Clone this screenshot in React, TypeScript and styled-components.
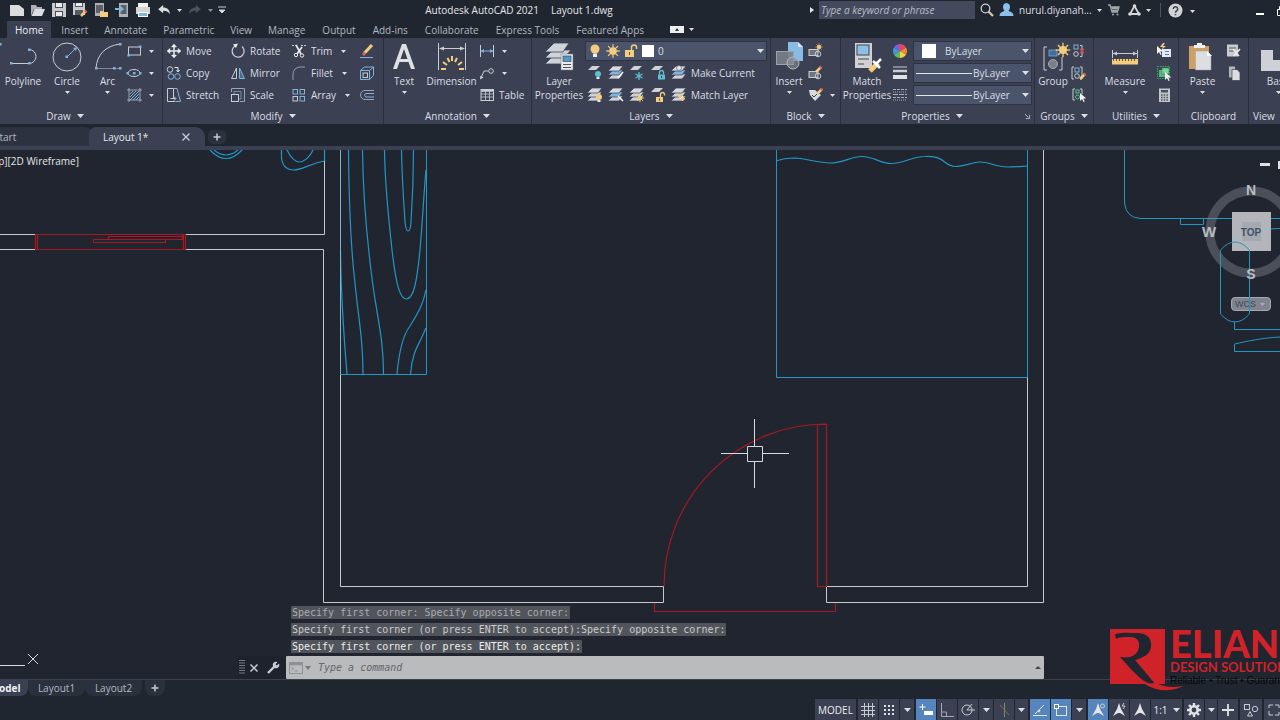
import React from "react";
import styled, { createGlobalStyle } from "styled-components";

const c = {
  frame: "#20262f",
  canvas: "#212530",
  ribbon: "#3b4053",
  edge: "#2a2f3d",
  combo: "#4a546a",
  text: "#dcdfe4",
  dim: "#b4b9c1",
  icon: "#c9cdd3",
  blue: "#7fb4dc",
  amber: "#f3cc7e",
  cyan: "#2397c4",
  red: "#a81820",
  wall: "#c6c9d0",
};

const GlobalStyle = createGlobalStyle`
  * { box-sizing: border-box; }
  body { margin: 0; overflow: hidden; background: ${c.frame}; }
  button, select, input { font: inherit; color: inherit; border: 0; padding: 0; margin: 0; background: none; }
  button { cursor: pointer; white-space: nowrap; }
  select option { color: #222; }
`;

const Page = styled.div`
  position: relative;
  display: flex;
  flex-direction: column;
  height: 100vh;
  overflow: hidden;
  background: ${c.frame};
  color: ${c.text};
  font-family: "Open Sans", "Noto Sans", sans-serif;
  font-size: 10px;
  line-height: 14px;
`;

const Icon = styled.svg<{ $w?: number; $h?: number }>`
  display: block;
  flex: none;
  width: ${(p) => p.$w ?? 16}px;
  height: ${(p) => p.$h ?? 16}px;
  fill: none;
  stroke: ${c.icon};
  overflow: visible;
`;

/* ---------- title bar ---------- */
const TitleBar = styled.header`
  display: flex;
  align-items: center;
  flex: none;
  height: 20px;
`;
const QuickAccess = styled.div`
  display: flex;
  align-items: center;
  gap: 5px;
  width: 230px;
  height: 18px;
  padding-left: 9px;
`;
const PlainButton = styled.button<{ $w?: number }>`
  display: flex;
  flex: none;
  align-items: center;
  justify-content: center;
  width: ${(p) => (p.$w ? p.$w + "px" : "auto")};
`;
const WindowTitle = styled.h1`
  display: flex;
  justify-content: center;
  gap: 12px;
  flex: 1;
  margin: 0;
  font-size: 10px;
  font-weight: 400;
  color: #e4e6ea;
`;
const TitleTools = styled.div`
  display: flex;
  align-items: center;
  flex: none;
  width: 472px;
  height: 18px;
  overflow: hidden;
`;
const SearchInput = styled.input`
  && {
    flex: none;
    width: 156px;
    height: 18px;
    margin-left: 3px;
    padding: 0 2px;
    background: #434a5d;
    font-style: italic;
    color: #c3c7cf;
  }
  &::placeholder { color: #b9bdc6; opacity: 1; }
`;
const UserButton = styled.button`
  display: flex;
  flex: none;
  align-items: center;
  gap: 5px;
  width: 104px;
`;
const Divider = styled.span`
  flex: none;
  width: 1px;
  height: 14px;
  margin: 0 6px 0 3px;
  background: #4d5360;
`;
const WindowButtons = styled.div`
  display: flex;
  flex: none;
  gap: 13px;
  padding-left: 59px;
`;

/* ---------- menu ---------- */
const Menu = styled.nav`
  display: flex;
  align-items: flex-end;
  flex: none;
  height: 18px;
  padding-left: 7px;
`;
const MenuTab = styled.button<{ $active?: boolean }>`
  && {
    height: 17px;
    padding: 0 8px;
    color: ${(p) => (p.$active ? "#eef0f3" : c.dim)};
    background: ${(p) => (p.$active ? c.ribbon : "transparent")};
  }
  &:first-child { margin-right: 2px; }
  &:nth-child(n + 6) { margin-right: 1px; }
`;
const MinimizeRibbon = styled.button`
  && {
    display: flex;
    align-items: center;
    gap: 5px;
    height: 17px;
    margin-left: 17px;
  }
`;

/* ---------- ribbon ---------- */
const Ribbon = styled.section`
  display: flex;
  flex: none;
  margin-left: -32px;
  background: ${c.ribbon};
`;
const PanelBox = styled.div<{ $w: number; $grow?: boolean }>`
  display: flex;
  flex-direction: column;
  flex: ${(p) => (p.$grow ? "1 0 " : "0 0 ")} ${(p) => p.$w}px;
  min-width: 0;
  border-right: 1px solid ${c.edge};
`;
const PanelBody = styled.div<{ $pad?: number }>`
  display: flex;
  height: 70px;
  padding: 2px 0 0 ${(p) => p.$pad ?? 0}px;
`;
const PanelFoot = styled.button<{ $left?: boolean }>`
  && {
    display: flex;
    align-items: center;
    justify-content: ${(p) => (p.$left ? "flex-start" : "center")};
    gap: 6px;
    height: 16px;
    padding: 0 4px;
  }
`;
const FootLabel = styled.span`
  margin: 0 auto;
  display: flex;
  align-items: center;
  gap: 6px;
`;
const LargeButton = styled.button<{ $w: number }>`
  && {
    display: flex;
    flex: none;
    flex-direction: column;
    align-items: center;
    width: ${(p) => p.$w}px;
    height: 66px;
    padding-top: 2px;
    line-height: 14px;
  }
`;
const Column = styled.div<{ $w?: number }>`
  display: flex;
  flex: none;
  flex-direction: column;
  width: ${(p) => (p.$w ? p.$w + "px" : "auto")};
`;
const Row = styled.div<{ $gap?: number; $pad?: number }>`
  display: flex;
  align-items: center;
  gap: ${(p) => p.$gap ?? 0}px;
  height: 22px;
  padding-left: ${(p) => p.$pad ?? 0}px;
`;
const Tool = styled.button<{ $gap: number }>`
  && {
    display: flex;
    align-items: center;
    gap: ${(p) => p.$gap}px;
    height: 22px;
  }
`;
const ArrowSlot = styled.span`
  display: flex;
  justify-content: center;
  width: 15px;
`;
const Combo = styled.label<{ $w: number; $pad: number; $gap: number }>`
  display: flex;
  align-items: center;
  gap: ${(p) => p.$gap}px;
  width: ${(p) => p.$w}px;
  height: 20px;
  padding: 0 2px 0 ${(p) => p.$pad}px;
  background: ${c.combo};
  border: 1px solid #2d3344;
`;
const ComboSelect = styled.select`
  && {
    flex: 1;
    min-width: 0;
    appearance: none;
    outline: 0;
  }
`;
const Swatch = styled.span<{ $s: number }>`
  width: ${(p) => p.$s}px;
  height: ${(p) => p.$s}px;
  background: #fff;
`;
const LineSample = styled.span`
  width: 56px;
  height: 1px;
  background: #e3e5e9;
`;

/* ---------- drawing tabs ---------- */
const FileTabs = styled.nav`
  display: flex;
  align-items: flex-end;
  flex: none;
  height: 26px;
  border-bottom: 4px solid ${c.ribbon};
  overflow: hidden;
`;
const FileTab = styled.div<{ $active?: boolean; $w: number }>`
  display: flex;
  align-items: center;
  justify-content: space-between;
  width: ${(p) => p.$w}px;
  height: 19px;
  margin-left: -6px;
  padding: ${(p) => (p.$active ? "0 15px 0 14px" : "0")};
  border-radius: 7px 10px 0 0;
  background: ${(p) => (p.$active ? c.ribbon : "#2d3240")};
  color: ${(p) => (p.$active ? "#e6e8ec" : c.dim)};
`;
const NewTab = styled.button`
  && {
    display: flex;
    align-items: center;
    justify-content: center;
    width: 18px;
    height: 14px;
    margin: 0 0 2px 3px;
    border-radius: 5px;
    background: #2d323f;
  }
`;

/* ---------- canvas ---------- */
const Workspace = styled.main`
  position: relative;
  flex: 1;
  min-height: 0;
  overflow: hidden;
  background: ${c.canvas};
  border-bottom: 1px solid #3b414d;
`;
const Drawing = styled.svg`
  display: block;
  width: 100%;
  height: 100%;
  fill: none;
`;
const ViewLabel = styled.div`
  position: absolute;
  top: 4px;
  right: calc(100% - 79px);
  white-space: nowrap;
  color: #e3e5e9;
`;
const ViewTools = styled.div`
  position: absolute;
  top: 13px;
  right: -6px;
  display: flex;
  gap: 8px;
`;
const ViewCube = styled.div`
  position: absolute;
  top: 30px;
  right: -26px;
  width: 110px;
`;
const CubeText = styled.text`
  font-family: "Liberation Sans", Arial, sans-serif;
  font-weight: 700;
  text-anchor: middle;
`;
const WcsButton = styled.button`
  && {
    display: flex;
    align-items: center;
    justify-content: space-between;
    width: 40px;
    height: 14px;
    margin: 3px 0 0 35px;
    padding: 0 5px 0 3px;
    border-radius: 4px;
    border: 1px solid #a4a8b3;
    background: #8f939fdd;
    color: #444957;
    font-family: "Liberation Sans", Arial, sans-serif;
    font-size: 9px;
  }
`;
const CommandWindow = styled.section`
  position: absolute;
  left: 237px;
  right: 236px;
  bottom: 0;
  font-family: "DejaVu Sans Mono", monospace;
`;
const History = styled.div`
  display: flex;
  flex-direction: column;
  align-items: flex-start;
  gap: 4px;
  margin: 0 0 3px 54px;
`;
const HistoryLine = styled.p<{ $tone: string }>`
  margin: 0;
  padding: 0 1px;
  height: 13px;
  line-height: 13px;
  border-radius: 1px;
  white-space: nowrap;
  background: #51545a;
  color: ${(p) => p.$tone};
`;
const CommandBar = styled.div`
  display: flex;
  align-items: center;
  height: 23px;
  background: #1e222c;
`;
const CommandField = styled.label`
  display: flex;
  align-items: center;
  gap: 2px;
  flex: 1;
  height: 23px;
  padding: 0 3px;
  border-radius: 1px;
  background: #b9bbbd;
`;
const CommandInput = styled.input`
  && {
    flex: 1;
    min-width: 0;
    margin-left: 5px;
    outline: 0;
    font-style: italic;
    color: #333;
  }
  &::placeholder { color: #63666b; opacity: 1; }
`;

/* ---------- layout tabs and status bar ---------- */
const LayoutTabs = styled.nav`
  display: flex;
  flex: none;
  height: 19px;
  margin-left: -18px;
`;
const LayoutTab = styled.button<{ $active?: boolean; $w: number }>`
  && {
    width: ${(p) => p.$w}px;
    height: 16px;
    border-radius: 0 0 8px 8px;
    background: ${(p) => (p.$active ? "#3a4153" : "#2a303c")};
    color: ${(p) => (p.$active ? "#f2f3f5" : c.dim)};
    font-weight: ${(p) => (p.$active ? 700 : 400)};
  }
`;
const AddLayout = styled(LayoutTab)`
  && {
    display: flex;
    align-items: center;
    justify-content: center;
    margin-left: 3px;
  }
`;
const StatusBar = styled.footer`
  display: flex;
  flex: none;
  justify-content: flex-end;
  gap: 2px;
  height: 21px;
  margin-right: -4px;
`;
const StatusGroup = styled.div`
  display: flex;
  gap: 1px;
`;
const StatusButton = styled.button<{ $w?: number; $on?: boolean }>`
  && {
    display: flex;
    align-items: center;
    justify-content: center;
    gap: 5px;
    width: ${(p) => p.$w ?? 20}px;
    height: 21px;
    background: ${(p) => (p.$on ? "#5685bd" : c.ribbon)};
    color: #eceef1;
  }
`;

/* ---------- watermark ---------- */
const Brand = styled.aside`
  position: absolute;
  right: 0;
  bottom: 29px;
  display: flex;
  width: 170px;
  height: 64px;
  overflow: hidden;
  white-space: nowrap;
`;
const BrandText = styled.div`
  padding-left: 3px;
  margin-left: -23px;
  color: #cf2229;
  font-family: Lato, sans-serif;
  font-weight: 700;
`;
const BrandName = styled.div`
  font-size: 38px;
  line-height: 32px;
  font-weight: 900;
`;
const BrandLine = styled.div`
  font-size: 13px;
  line-height: 16px;
`;
const BrandMotto = styled.div`
  color: #07090d;
  font-family: "Liberation Sans", Arial, sans-serif;
  font-size: 10px;
  font-weight: 400;
  line-height: 11px;
`;

/* ---------- small glyphs ---------- */
const Caret = ({ s = 5, color = "#dcdfe4" }: { s?: number; color?: string }) => (
  <Icon $w={s} $h={s === 5 ? 3 : 4} viewBox="0 0 8 4" preserveAspectRatio="none">
    <path d="M0 0H8L4 4Z" fill={color} stroke="none" />
  </Icon>
);

const Sheet = ({ x, y, f = "#cfd2d8" }: { x: number; y: number; f?: string }) => (
  <path d={`M${x - 1} ${y + 4}l4-4h8l-4 4z`} fill={f} stroke="none" />
);
const Bulb = ({ x, y, f }: { x: number; y: number; f: string }) => (
  <g stroke="none">
    <circle cx={x} cy={y} r="3" fill={f} />
    <path d={`M${x - 1.5} ${y + 3}h3v2h-3z`} fill="#e8e8e8" />
  </g>
);
const Sun = ({ x, y, r = 2.4 }: { x: number; y: number; r?: number }) => (
  <g stroke={c.amber}>
    <circle cx={x} cy={y} r={r} fill={c.amber} stroke="none" />
    {[0, 45, 90, 135].map((a) => (
      <path key={a} d={`M${x - r * 1.8} ${y}H${x + r * 1.8}`} transform={`rotate(${a} ${x} ${y})`} strokeWidth={r / 3} />
    ))}
  </g>
);
const Lock = ({ x, y, f, open }: { x: number; y: number; f: string; open?: boolean }) => (
  <g>
    <path d={open ? `M${x + 4.5} ${y}v-2.5a2 2 0 0 1 4 0v1` : `M${x + 1.5} ${y}v-2a2 2 0 0 1 4 0v2`} stroke={f} strokeWidth="1.3" />
    <rect x={x} y={y} width="7" height="5" fill={f} stroke="none" />
    <path d={`M${x + 3.5} ${y + 1.5}v2`} stroke="#3b4053" />
  </g>
);
const Stack = ({ mid = "#cfd2d8" }: { mid?: string }) => (
  <g stroke="#3b4053" strokeWidth=".7">
    <path d="M0 14l5-5h10l-4 5z" fill="#cfd2d8" />
    <path d="M0 10l5-5h10l-4 5z" fill={mid} />
    <path d="M0 6l5-5h10l-4 5z" fill="#d6d9de" />
  </g>
);
const Pencil = ({ x, y }: { x: number; y: number }) => (
  <g>
    <path d={`M${x} ${y}l5-5`} stroke={c.amber} strokeWidth="2.500" />
    <path d={`M${x + 4} ${y - 4}l1.500-1.500`} stroke="#d9584f" strokeWidth="2.500" />
  </g>
);
const Cursor = ({ x, y }: { x: number; y: number }) => (
  <path d={`M${x} ${y}v8l2-2 1.500 3 1.200-.6-1.400-3h3z`} fill="#f2f2f2" stroke="none" />
);

/* ---------- ribbon helpers ---------- */
type PanelProps = { title: string; w: number; pad?: number; arrow?: boolean; left?: boolean; grow?: boolean; launcher?: boolean; children: React.ReactNode };
const Panel = ({ title, w, pad, arrow = true, left, grow, launcher, children }: PanelProps) => (
  <PanelBox $w={w} $grow={grow}>
    <PanelBody $pad={pad}>{children}</PanelBody>
    <PanelFoot $left={left || launcher}>
      {launcher ? (
        <>
          <FootLabel>{title}<Caret s={7} /></FootLabel>
          <Icon $w={5} $h={5} viewBox="0 0 6 6"><path d="M0 0l4 4M5.500 1v4.500H1" /></Icon>
        </>
      ) : (
        <>{title}{arrow && <Caret s={7} />}</>
      )}
    </PanelFoot>
  </PanelBox>
);
const Large = ({ w, icon, label, arrow }: { w: number; icon: React.ReactNode; label: string[]; arrow?: boolean }) => (
  <LargeButton $w={w}>
    <Icon $w={32} $h={32} viewBox="0 0 32 32">{icon}</Icon>
    {label.map((l) => <span key={l}>{l}</span>)}
    {arrow && <Icon $w={5} $h={8} viewBox="0 0 5 8"><path d="M0 3h5L2.500 6z" fill={c.text} stroke="none" /></Icon>}
  </LargeButton>
);
const Small = ({ icon, label, arrow, name }: { icon: React.ReactNode; label?: string; arrow?: boolean; name?: string }) => (
  <Tool aria-label={label ?? name} $gap={label ? 4 : 2}>
    <Icon viewBox="0 0 16 16">{icon}</Icon>
    {label}
    {arrow && <ArrowSlot><Caret /></ArrowSlot>}
  </Tool>
);

const Node = ({ x, y }: { x: number; y: number }) => <rect x={x - 1} y={y - 1} width="2.500" height="2.500" fill={c.blue} stroke="none" />;

const QUICK: [string, React.ReactNode][] = [
  ["New", <path d="M1 3h9l5 4v7H1z" fill="#dcdcdc" stroke="none" />],
  ["Open", <g stroke="none"><path d="M1 14V3h5l1 2h5v2H4L1 14z" fill="#aeb1b6" /><path d="M4.500 7H15l-3 7H1.500z" fill="#dcdde0" /></g>],
  ["Save", <g stroke="none"><path d="M1 1h14v14H1z" fill="#c8cacd" /><path d="M4 1h8v5H4zM4 9h8v6H4z" fill="#4a4e57" /><path d="M5 1h6v4H5zM5 10h6v4H5z" fill="#ececec" /></g>],
  ["Save As", <g><path d="M1 1h12v12H1z" fill="#c8cacd" stroke="none" /><path d="M3 1h8v4H3zM3 8h8v5H3z" fill="#555a63" stroke="none" /><path d="M4 1h6v3H4z" fill="#eee" stroke="none" /><Pencil x={9} y={14} /></g>],
  ["Open from Web", <g stroke="none"><rect x="2" y="1" width="9" height="13" fill="#aeb2b8" /><rect x="3" y="3" width="7" height="8" fill="#5b6069" /><path d="M7 15V9h3l1 1h4v5z" fill={c.amber} /></g>],
  ["Save to Web", <g stroke="none"><rect x="5" y="1" width="9" height="14" fill="#aeb2b8" /><rect x="6.500" y="3" width="6" height="9" fill="#5b6069" /><path d="M1 6h5V3.500L10 7l-4 3.500V8H1z" fill={c.blue} /></g>],
  ["Plot", <g stroke="none"><path d="M3 1h10v4H3z" fill="#f2f2f2" /><path d="M1 5h14v7H1z" fill="#d5d5d5" /><path d="M3 10h10v5H3z" fill="#fff" /><path d="M4 11h8v3H4z" fill={c.blue} /></g>],
];

const QuickBar = () => (
  <QuickAccess>
    {QUICK.map(([name, art]) => (
      <PlainButton key={name} aria-label={name} $w={16}><Icon viewBox="0 0 16 16">{art}</Icon></PlainButton>
    ))}
    <PlainButton aria-label="Undo" $w={16}>
      <Icon $w={14} $h={10} viewBox="0 0 14 12"><path d="M0 5l6-5v3c5 0 8 3 8 8-2-3-4-4-8-4v3z" fill="#dadcdf" stroke="none" /></Icon>
    </PlainButton>
    <PlainButton aria-label="Undo list" $w={5}><Caret s={5} /></PlainButton>
    <PlainButton aria-label="Redo" $w={16}>
      <Icon $w={14} $h={10} viewBox="0 0 14 12"><path d="M14 5L8 0v3C3 3 0 6 0 11c2-3 4-4 8-4v3z" fill="#4b515d" stroke="none" /></Icon>
    </PlainButton>
    <PlainButton aria-label="Redo list" $w={5}><Caret s={5} color="#8b909a" /></PlainButton>
    <PlainButton aria-label="Customize toolbar" $w={8}>
      <Icon $w={8} $h={8} viewBox="0 0 8 8"><path d="M0 1h8M1 4h6L4 7z" fill={c.text} /></Icon>
    </PlainButton>
  </QuickAccess>
);

const Header = () => (
  <TitleBar>
    <QuickBar />
    <WindowTitle><span>Autodesk AutoCAD 2021</span><span>Layout 1.dwg</span></WindowTitle>
    <TitleTools>
      <PlainButton aria-label="Collapse search" $w={8}><Icon $w={4} $h={6} viewBox="0 0 4 6"><path d="M0 0l4 3-4 3z" fill="#e6e8eb" stroke="none" /></Icon></PlainButton>
      <SearchInput aria-label="Search" placeholder="Type a keyword or phrase" />
      <PlainButton aria-label="Search" $w={24}>
        <Icon $w={14} $h={14} viewBox="0 0 14 14"><circle cx="5.500" cy="5.500" r="4.300" strokeWidth="1.300" /><path d="M8.500 8.500l4.500 4.500" strokeWidth="2.200" stroke="#d8c9ae" /></Icon>
      </PlainButton>
      <UserButton>
        <Icon $w={15} $h={14} viewBox="0 0 15 14"><path d="M7.500 0a4 4 0 0 1 3.500 4c0 2-1 3-1.500 4 3 1 5 2 5 5H.5c0-3 2-4 5-5C5 7 4 6 4 4a4 4 0 0 1 3.500-4z" fill="#8cc0ea" stroke="none" /></Icon>
        nurul.diyanah...
        <Caret />
      </UserButton>
      <PlainButton aria-label="App store" $w={22}>
        <Icon $w={12} $h={12} viewBox="0 0 12 12"><path d="M0 1h2l2 7h6M3 3h8L10 6.500H4M4 4.500h6.500" strokeWidth="1.300" stroke="#a3a6ab" /><circle cx="5" cy="10.500" r="1" fill="#a3a6ab" stroke="none" /><circle cx="9.500" cy="10.500" r="1" fill="#a3a6ab" stroke="none" /></Icon>
      </PlainButton>
      <PlainButton aria-label="Account" $w={32}>
        <Icon $w={26} $h={12} viewBox="0 0 26 12"><path d="M6.500 2L2 10h9z" strokeWidth="1.800" stroke="#d5d7db" /><g fill="#d5d7db" stroke="none"><circle cx="6.500" cy="2" r="1.800" /><circle cx="2" cy="10" r="1.800" /><circle cx="11" cy="10" r="1.800" /><path d="M18 5h5l-2.500 3z" /></g></Icon>
      </PlainButton>
      <Divider />
      <PlainButton aria-label="Help" $w={30}>
        <Icon $w={28} $h={15} viewBox="0 0 28 15"><circle cx="7.500" cy="7.500" r="7" fill="#d0d2d5" stroke="none" /><path d="M5.300 6a2.200 2.200 0 1 1 3.300 1.900c-.8.500-1.100.8-1.100 1.800M7.500 11v1.300" stroke="#3b404b" strokeWidth="1.500" /><path d="M22 7h5l-2.500 3z" fill={c.text} stroke="none" /></Icon>
      </PlainButton>
      <WindowButtons>
        <PlainButton aria-label="Minimize" $w={8}>
          <Icon $w={8} $h={14} viewBox="0 0 8 14"><path d="M0 11h8" strokeWidth="2" stroke="#fff" /></Icon>
        </PlainButton>
        <PlainButton aria-label="Restore" $w={10}>
          <Icon $w={10} $h={14} viewBox="0 0 10 14"><path d="M.5 6.500h6v6h-6zM2.500 6V3.500h6V10H7" stroke="#fff" /></Icon>
        </PlainButton>
      </WindowButtons>
    </TitleTools>
  </TitleBar>
);

const MENU = ["Home", "Insert", "Annotate", "Parametric", "View", "Manage", "Output", "Add-ins", "Collaborate", "Express Tools", "Featured Apps"];

const DrawPanel = () => (
  <Panel title="Draw" w={195}>
    <Large w={33} label={[]} icon={<><path d="M4 30L30 4" /><Node x={31} y={2} /></>} />
    <Large w={44} label={["Polyline"]} icon={<><path d="M4 21.500h18a7 7 0 0 0 0-14" /><Node x={4} y={21} /><Node x={22} y={21} /><Node x={22} y={7.5} /></>} />
    <Large w={44} label={["Circle"]} arrow icon={<><circle cx="16" cy="15" r="14" /><path d="M16 15l8-8" stroke={c.blue} /><path d="M26 5l-1 4-3-3z" fill={c.blue} stroke="none" /><Node x={15.5} y={14.5} /></>} />
    <Large w={37} label={["Arc"]} arrow icon={<><path d="M4 26C5 13 13 4 28 2" /><path d="M4 26.500h24" stroke="#8b98ad" strokeWidth=".8" /><Node x={4} y={26} /><Node x={28} y={2} /><Node x={22} y={26} /><Node x={28} y={26} /></>} />
    <Column>
      <Small name="Rectangle" arrow icon={<><rect x="2.500" y="4" width="12" height="8" /><Node x={2.5} y={12} /><Node x={14} y={3.5} /></>} />
      <Small name="Ellipse" arrow icon={<><ellipse cx="8" cy="8" rx="6" ry="3.500" /><Node x={8} y={8} /><Node x={1.5} y={8} /><Node x={14} y={8} /></>} />
      <Small name="Hatch" arrow icon={<><path d="M3 1v14M14 1v14M1 3h15M1 13h15" strokeWidth=".7" /><path d="M4 7l3-3M4 10l6-6M4 13l9-9M7 13l6-6M10 13l3-3" stroke={c.blue} /></>} />
    </Column>
  </Panel>
);

const ModifyPanel = () => (
  <Panel title="Modify" w={221} pad={3}>
    <Column $w={64}>
      <Small label="Move" icon={<path d="M8 1l2.500 3h-2v3.500H12v-2L15 8l-3 2.500v-2H8.500V12h2L8 15l-2.500-3h2V8.500H4v2L1 8l3-2.500v2h3.500V4h-2z" fill="#eceef1" stroke="#eceef1" strokeWidth=".5" />} />
      <Small label="Copy" icon={<><circle cx="4" cy="4.500" r="2.800" /><path d="M8.500 2.500H12V6M10.500 5l1.500 2 1.500-2" stroke="#eee" /><circle cx="5" cy="11.500" r="2.800" stroke={c.blue} /><circle cx="11.500" cy="11.500" r="2.800" stroke={c.blue} /></>} />
      <Small label="Stretch" icon={<><path d="M1.500 1.500h6v10H9M1.500 1.500v13h8" /><path d="M7.500 1.500H11L14.500 14.500H10" stroke={c.blue} /><path d="M4.500 11.500h5M8 9.500l2 2-2 2" /></>} />
    </Column>
    <Column $w={61}>
      <Small label="Rotate" icon={<><path d="M5 3a6 6 0 1 0 7 .5" strokeWidth="1.300" /><path d="M3 1.500l5-1-2 4.500z" fill="#eee" stroke="none" /></>} />
      <Small label="Mirror" icon={<><path d="M6.500 3v10.500h-5z" /><path d="M9.500 3v10.500h5z" stroke={c.blue} fill="#476a8d" /></>} />
      <Small label="Scale" icon={<><path d="M1.500 5V1.500h13v13H10" stroke="#9aa6b8" /><rect x="1.500" y="7.500" width="7" height="7" /><path d="M4 7V4.500h7V12H9" stroke={c.blue} strokeWidth=".7" /></>} />
    </Column>
    <Column $w={68}>
      <Small label="Trim" arrow icon={<><path d="M1 2.500h4M10 2.500h5" strokeDasharray="2 1" /><path d="M5 2l5 9M11 4L6 11" stroke="#eee" strokeWidth="1.600" /><circle cx="5" cy="12" r="1.700" stroke="#eee" /><circle cx="11" cy="12.500" r="1.700" stroke="#eee" /></>} />
      <Small label="Fillet" arrow icon={<path d="M2 15V9a7 7 0 0 1 7-7h5" stroke="#8ca0b8" />} />
      <Small label="Array" arrow icon={<><rect x="2" y="2.500" width="4.500" height="4.500" stroke={c.blue} /><rect x="9" y="2.500" width="4.500" height="4.500" stroke={c.blue} /><rect x="2" y="9.500" width="4.500" height="4.500" /><rect x="9" y="9.500" width="4.500" height="4.500" stroke={c.blue} /></>} />
    </Column>
    <Column>
      <Small name="Erase" icon={<><path d="M1 14.500h13" stroke={c.blue} /><path d="M5.500 10L13 2" stroke={c.amber} strokeWidth="3" /><path d="M4 12l2-2.500" stroke="#d9645c" strokeWidth="3" /></>} />
      <Small name="Explode" icon={<><path d="M1.500 5.500h9v9h-9z" stroke={c.blue} /><path d="M1.500 5.500l4-3.500h9l-4 3.500M14.500 2v8.500l-4 4" stroke={c.blue} /><rect x="4" y="8" width="4.500" height="4.500" /></>} />
      <Small name="Offset" icon={<><path d="M15 3.500H6a4.500 4.500 0 0 0 0 9h9" stroke="#9aa6b8" /><path d="M15 6.500H7a1.800 1.800 0 0 0 0 3.500h8" stroke={c.blue} /></>} />
    </Column>
  </Panel>
);

const AnnotationPanel = () => (
  <Panel title="Annotation" w={148}>
    <Large w={40} label={["Text"]} arrow icon={<path d="M5 27L14 2h4l9 25h-4l-2.500-7h-9L9 27zM12.500 17h7L16 7z" fill="#dfe1e4" stroke="none" />} />
    <Large w={55} label={["Dimension"]} icon={<><path d="M2.500 1v27M29.500 1v27M4 6.500h24" /><path d="M3 6.500l5-2v4zM29 6.500l-5-2v4z" fill={c.icon} stroke="none" /><path d="M5 27h5M7 20l4 3M11.500 16l2 4M16 14v5M21 16l-2 4M26 20l-4 3M28 27h-5" stroke={c.amber} strokeWidth="2" /></>} />
    <Column>
      <Small name="Linear dimension" arrow icon={<><path d="M1.500 2v12M14.500 2v12" /><path d="M2 8h12" stroke={c.blue} /><path d="M2 8l3-2v4zM14 8l-3-2v4z" fill={c.blue} stroke="none" /></>} />
      <Small name="Leader" arrow icon={<><path d="M2 13l3-7h4" /><circle cx="12" cy="6" r="2.300" /><path d="M1 14.500l.5-4 3 2z" fill={c.icon} stroke="none" /></>} />
      <Small label="Table" icon={<><rect x="2" y="2.500" width="12.500" height="11" /><path d="M2 3.500h12.500" strokeWidth="2.500" /><path d="M2 7h12.500M2 10h12.500M6.500 4v9.500M10.500 4v9.500" strokeWidth=".8" /></>} />
    </Column>
  </Panel>
);

const LAYER_A: [string, React.ReactNode][] = [
  ["Off", <><Sheet x={2} y={1} /><Bulb x={11} y={9} f="#5fc0cf" /></>],
  ["Isolate", <><Stack mid={c.blue} /><path d="M15 7l-5 6" stroke="#fff" strokeWidth="1.500" /></>],
  ["Freeze", <><Sheet x={2} y={1} /><path d="M10 7v8M6.500 9l7 4M13.500 9l-7 4" stroke="#5fc0cf" strokeWidth="1.300" /></>],
  ["Lock", <><Sheet x={2} y={1} /><Lock x={8} y={9.5} f="#5fc0cf" /></>],
];
const LAYER_B: [string, React.ReactNode][] = [
  ["Turn all on", <><Stack /><Bulb x={12} y={10} f={c.amber} /></>],
  ["Unisolate", <><Stack mid={c.blue} /><path d="M10 9l5 5" stroke="#fff" strokeWidth="1.500" /></>],
  ["Thaw", <><Stack /><Sun x={11} y={11} /></>],
  ["Unlock", <><Sheet x={2} y={1} /><Lock x={6} y={10} f={c.amber} open /></>],
];

const LayersPanel = () => (
  <Panel title="Layers" w={239} pad={1}>
    <Large w={52} label={["Layer", "Properties"]} icon={<><g fill="#cfd2d8" stroke="#3b4053" strokeWidth=".8"><path d="M2 22l8-8h18l-7 8z" /><path d="M2 16l8-8h18l-7 8z" /><path d="M2 10l9-9h15l-6 9z" /></g><rect x="18" y="12" width="12" height="16" fill="#e9eaec" stroke="#6d7380" strokeWidth=".5" /><rect x="20" y="14" width="8" height="5.500" fill="#4c9ad3" stroke="#333" strokeWidth=".6" /><path d="M20 22.500h8M20 25.500h8" stroke="#555" /></>} />
    <Column>
      <Row>
        <Combo $w={182} $pad={2} $gap={4}>
          <Icon $w={14} viewBox="0 0 14 16"><circle cx="7" cy="6" r="4.500" fill={c.amber} stroke="none" /><path d="M5 10.500h4V14H5z" fill="#eee" stroke="none" /></Icon>
          <Icon $w={14} viewBox="0 0 14 16"><Sun x={7} y={8} r={3.8} /></Icon>
          <Icon $w={14} viewBox="0 0 14 16"><rect x="1" y="7" width="9" height="7" fill={c.amber} stroke="none" /><path d="M7.500 7V4.500a2.500 2.500 0 0 1 5 0V6" stroke={c.amber} strokeWidth="1.500" /><path d="M5.500 9v3" stroke="#6b5c37" /></Icon>
          <Swatch $s={12} />
          <ComboSelect aria-label="Current layer"><option>0</option></ComboSelect>
          <Caret s={7} />
        </Combo>
      </Row>
      <Row $gap={5} $pad={2}>
        {LAYER_A.map(([n, art]) => <Small key={n} name={n} icon={art} />)}
        <Small label="Make Current" icon={<><Stack mid={c.blue} /><circle cx="8" cy="3" r="2.500" fill="#e4e5e8" stroke="#3b4053" strokeWidth=".5" /></>} />
      </Row>
      <Row $gap={5} $pad={2}>
        {LAYER_B.map(([n, art]) => <Small key={n} name={n} icon={art} />)}
        <Small label="Match Layer" icon={<><Stack /><path d="M8 8l5 5" stroke={c.amber} strokeWidth="3.500" /><path d="M12 9l-3 3" stroke="#fff" /></>} />
      </Row>
    </Column>
  </Panel>
);

const BlockPanel = () => (
  <Panel title="Block" w={70}>
    <Large w={36} label={["Insert"]} arrow icon={<><path d="M15 0h10l5 5v14H15z" fill="#86bce6" stroke="none" /><path d="M25 0v5h5z" fill="#d7e8f5" stroke="none" /><rect x="3.500" y="9.500" width="17" height="13" fill="#7b7f89" fillOpacity=".9" stroke="#9da1aa" /><circle cx="20" cy="21" r="6" fill="#8b8f98" fillOpacity=".6" stroke="#b7bac1" /></>} />
    <Column>
      <Small name="Create block" icon={<><rect x="2" y="6.500" width="9" height="6" fill="#71757f" /><circle cx="11" cy="11" r="2.800" /><Sun x={12} y={4} r={2} /></>} />
      <Small name="Edit block" icon={<><rect x="2" y="6.500" width="9" height="6" fill="#71757f" /><circle cx="11" cy="11" r="2.800" /><Pencil x={9} y={7} /></>} />
      <Small name="Edit attributes" arrow icon={<><path d="M2 3h6l6 5-6 6-5-6z" fill="#d8dadd" stroke="none" /><path d="M5 8l2 2 3-3" stroke="#444" /><Pencil x={10} y={7} /></>} />
    </Column>
  </Panel>
);

const PropertiesPanel = () => (
  <Panel title="Properties" w={194} launcher pad={1}>
    <Large w={50} label={["Match", "Properties"]} icon={<><path d="M4 1h17v25H4z" fill="#cfd1d5" stroke="none" /><rect x="6" y="3" width="12" height="10" fill="#8cc0ea" stroke="#444" /><path d="M7 17h11M7 22h6" stroke="#444" /><path d="M19 29l8-8" stroke={c.amber} strokeWidth="5" /><path d="M22 19l7 7M26 21l4-4" stroke="#fff" strokeWidth="2.500" /></>} />
    <Column $w={21}>
      <Row>
        <Icon viewBox="0 0 16 16">
          {["#e8455a", "#f2873c", "#f5cf4a", "#58bf62", "#3f97e0", "#8a5bd0"].map((f, i) => (
            <path key={f} d="M8 8L8 1A7 7 0 0 1 14.060 4.500Z" fill={f} stroke="none" transform={`rotate(${i * 60} 8 8)`} />
          ))}
        </Icon>
      </Row>
      <Row><Icon viewBox="0 0 16 16"><path d="M1 2h14" strokeWidth="1" /><path d="M1 6h14" strokeWidth="2.500" /><path d="M1 12h14" strokeWidth="4" stroke="#dfe1e4" /></Icon></Row>
      <Row><Icon viewBox="0 0 16 16" strokeWidth=".8"><path d="M1 2.500h14M1 10.500h14" strokeDasharray="3 1" /><path d="M1 5h14M1 13h14" strokeDasharray="1 1" /><path d="M1 7.500h14" strokeDasharray="5 1" /></Icon></Row>
    </Column>
    <Column>
      <Row><Combo $w={119} $pad={8} $gap={9}><Swatch $s={14} /><ComboSelect aria-label="Object color"><option>ByLayer</option></ComboSelect><Caret s={7} /></Combo></Row>
      <Row><Combo $w={119} $pad={2} $gap={1}><LineSample /><ComboSelect aria-label="Lineweight"><option>ByLayer</option></ComboSelect><Caret s={7} /></Combo></Row>
      <Row><Combo $w={119} $pad={2} $gap={1}><LineSample /><ComboSelect aria-label="Linetype"><option>ByLayer</option></ComboSelect><Caret s={7} /></Combo></Row>
    </Column>
  </Panel>
);

const GroupsPanel = () => (
  <Panel title="Groups" w={59}>
    <Large w={36} label={["Group"]} icon={<><path d="M10 5H7v23h3M22 28h3V15" /><rect x="12" y="8" width="8" height="6" fill="#3d6f9f" stroke={c.blue} strokeWidth=".7" /><circle cx="16" cy="22" r="4.500" fill="#7b7f89" stroke="#a7abb3" /><Sun x={26} y={8} r={4} /></>} />
    <Column>
      <Small name="Ungroup" icon={<><path d="M9 2.500h2v11H9" /><rect x="3" y="2" width="4" height="4" stroke={c.blue} /><circle cx="5" cy="11" r="2.300" /><path d="M9 6l4 4M13 6l-4 4" stroke="#d9434d" strokeWidth="1.500" /></>} />
      <Small name="Group edit" icon={<><path d="M3 2H1v12h2M9 2h2v12H9" /><rect x="4" y="3" width="4" height="4" stroke={c.blue} /><circle cx="6" cy="11" r="2.300" /><Pencil x={9} y={14} /></>} />
      <Small name="Group selection" icon={<><path d="M4 2H2v11h2M9 2h2v5" /><rect x="5" y="3" width="3" height="3" stroke="#58c18a" /><circle cx="6.500" cy="10" r="2" stroke="#58c18a" /><Cursor x={9} y={6} /></>} />
    </Column>
  </Panel>
);

const UtilitiesPanel = () => (
  <Panel title="Utilities" w={85}>
    <Large w={62} label={["Measure"]} arrow icon={<><path d="M3.500 8v8M28.500 8v8M4 11.500h24" /><path d="M4 11.500l4-2v4zM28 11.500l-4-2v4z" fill={c.icon} stroke="none" /><rect x="3" y="17" width="26" height="5.500" fill={c.amber} stroke="none" /><path d="M4 18h24" strokeDasharray="1 2" strokeWidth="2" stroke="#6b5a35" /></>} />
    <Column>
      <Small name="Quick select" icon={<><rect x="6" y="6" width="9" height="8" fill="#e6e9ed" stroke="none" /><path d="M9 8.500h4M9 11.500h4" stroke="#3b8ccc" /><Cursor x={1} y={3} /><path d="M7 0L4 4h3L5 7l5-4H7l2-3z" fill={c.amber} stroke="none" /></>} />
      <Small name="Select all" icon={<><path d="M1.500 1.500h12v12h-12z" stroke="#3cab6a" strokeDasharray="1.500 1" /><rect x="3" y="5" width="8" height="7" fill="#55b97c" stroke="none" /><rect x="6" y="3" width="7" height="6" fill="#7ed49d" stroke="#2e7d4e" strokeWidth=".6" /><Cursor x={9} y={7} /></>} />
      <Small name="Calculator" icon={<><rect x="3" y="1.500" width="11" height="13.500" fill="#c3c6cb" stroke="none" /><rect x="5" y="3" width="7" height="2.500" fill="#4b505c" stroke="none" /><path d="M5 8h7M5 10.500h7M5 13h7" stroke="#4b505c" strokeDasharray="1.500 1.200" strokeWidth="1.500" /></>} />
    </Column>
  </Panel>
);

const ClipboardPanel = () => (
  <Panel title="Clipboard" w={70} arrow={false}>
    <Large w={47} label={["Paste"]} arrow icon={<><rect x="2" y="4" width="20" height="23" fill="#cf9f63" stroke="none" /><path d="M7 3h3V1h5v2h3v3H7z" fill="#f0f0f0" stroke="none" /><path d="M8.500 9H20l4 4v15H8.500z" fill="#dcdee1" stroke="#9b9fa8" strokeWidth=".5" /><path d="M20 9v5h5z" fill="#fff" stroke="none" /></>} />
    <Column>
      <Small name="Cut" icon={<><path d="M1 1.500h11v12H1z" fill="#c9ccd1" stroke="none" /><path d="M3 5h7M3 8h5" stroke="#555" /><path d="M7 6l6 7M14 6l-6 7" stroke="#eee" strokeWidth="1.500" /></>} />
      <Small name="Copy clip" icon={<><path d="M3 1.500h6v11H3z" fill="#b3b6bc" stroke="none" /><path d="M6 4.500h5l3 3v8H6z" fill="#dcdee1" stroke="#3b4053" strokeWidth=".7" /></>} />
    </Column>
  </Panel>
);

const RibbonBar = () => (
  <Ribbon>
    <DrawPanel />
    <ModifyPanel />
    <AnnotationPanel />
    <LayersPanel />
    <BlockPanel />
    <PropertiesPanel />
    <GroupsPanel />
    <UtilitiesPanel />
    <ClipboardPanel />
    <Panel title="View" w={64} grow left>
      <Large w={58} label={["Base"]} arrow icon={<path d="M11 8v21h28V18H23V8z" fill="#cdd0d5" stroke="none" transform="translate(-12 4) translate(0 -4)" />} />
    </Panel>
  </Ribbon>
);

const Plan = () => (
  <Drawing viewBox="0 150 1280 530" preserveAspectRatio="xMinYMin slice" role="img" aria-label="Floor plan">
    <g stroke={c.cyan} strokeWidth="1.200">
      <path d="M210 150Q226 167 242 150M214 150Q226 160 238 150M281.500 150V158Q283 170 294 170C302 170 312 163 324.500 161V150M287 150C291 158 296 162 299.500 162C304 162 310 157 313 150" />
      <path d="M340.500 250C341 300 345 350 347 374M348.500 150C349 200 351 250 355 283C359 325 363 335 363 374M362.500 150C363 190 366 230 371 270C376 315 383.500 335 383.500 374" />
      <path d="M384.500 150C385 190 389 220 392 250C396 285 400 299 406.500 299C414 299 417 280 420 250C423 215 424 190 426 170M401.500 150C402 180 404 205 405 222Q406 231 408 231Q410.500 231 411 222C412.500 200 413.500 175 413.500 150" />
      <path d="M397 374C399 352 403 335 410 326C418 313 423 305 426 290M410.500 374C412 355 417 347 421 339L426 328" />
      <path d="M776 161C784 158 789 158 795 158C808 159 818 163 830 163C844 163 850 156.500 862 156.500C874 156.500 880 163.500 891 163.500C904 163.500 910 157 925 156.500C945 155 944 166.500 955 166.500C965 166.500 972 162 980 162C990 162 995 167 1008 167C1016 167 1020 166.500 1027 166" />
    </g>
    <g stroke={c.wall}>
      <path d="M0 234.500H324.500V161M0 249.500H323.500V602.500H663.500V586.500H340.500V374M1027.500 377V586.500H826.500V602.500H1043.500V150" />
    </g>
    <g stroke={c.cyan}>
      <path d="M340.500 150V374.500H426.500V150M776.500 150V377.500H1027.500V150" />
      <path d="M1124.500 150V203Q1126 218 1141 218.500H1280M1180.500 219V224.500H1203.500V219M1234.500 322V329.500H1280M1280 337C1262 338 1248 341 1234.500 344V351.500H1280" />
    </g>
    <path d="M340.500 150V374" stroke="#79b4cc" />
    <g stroke={c.red} strokeWidth="1.200">
      <path d="M35.500 234.500H185.500V249.500H35.500ZM37.500 235V249M183.500 235V249M108.500 239V236.500H182.500V239.500H108.500M93.500 239.500H165.500V242.500H93.500Z" />
      <path d="M664 586A162 162 0 0 1 826 424M817.500 424.500H826.500V586.500H817.500ZM654.500 603V611.500H835.500V603" />
    </g>
    <g stroke="#d6d9de">
      <path d="M747.500 446.500H762.500V461.500H747.500ZM721 453.500H747M763 453.500H789M754.500 419V446M754.500 462V488" />
      <path d="M0 665.500H25M28 654L38 664M38 654L28 664" />
    </g>
  </Drawing>
);

const Cube = () => (
  <ViewCube>
    <Icon $w={110} $h={114} viewBox="1196 180 110 114">
      <circle cx="1251" cy="232" r="41" stroke="#8b8f99" strokeOpacity=".4" strokeWidth="9" />
      <rect x="1232" y="212" width="39" height="39" fill="#b3b5ba" stroke="none" />
      <rect x="1242" y="222" width="19" height="19" fill="#a5a9b0" stroke="none" />
      <path d="M1234.500 240V235Q1252 230 1271 229" stroke="#8fc0d2" strokeWidth=".8" />
      <path d="M1271 229Q1276 228.500 1290 228" stroke={c.cyan} />
      <path d="M1220.500 250Q1235 234 1249.500 250V314Q1235 330 1220.500 314Z" stroke={c.cyan} />
      <g stroke="none">
        <CubeText x="1251" y="195" fontSize="14" fill="#b9bcc2">N</CubeText>
        <CubeText x="1209" y="237" fontSize="15" fill="#b9bcc2">W</CubeText>
        <CubeText x="1251" y="279" fontSize="14" fill="#b9bcc2">S</CubeText>
        <CubeText x="1251" y="236" fontSize="10" fill="#475061">TOP</CubeText>
      </g>
    </Icon>
    <WcsButton>WCS<Caret s={5} color="#a9adb8" /></WcsButton>
  </ViewCube>
);

const Command = () => (
  <CommandWindow>
    <History>
      <HistoryLine $tone="#a9abaf">Specify first corner: Specify opposite corner:</HistoryLine>
      <HistoryLine $tone="#c9cbce">Specify first corner (or press ENTER to accept):Specify opposite corner:</HistoryLine>
      <HistoryLine $tone="#ececee">Specify first corner (or press ENTER to accept):</HistoryLine>
    </History>
    <CommandBar>
      <PlainButton aria-label="Move window" $w={10}><Icon $w={6} $h={15} viewBox="0 0 6 15"><path d="M1 0v15M3 0v15M5 0v15" strokeDasharray="1 1.500" /></Icon></PlainButton>
      <PlainButton aria-label="Close" $w={14}><Icon $w={8} $h={8} viewBox="0 0 8 8"><path d="M.5.5l7 7M7.500.5l-7 7" strokeWidth="1.500" /></Icon></PlainButton>
      <PlainButton aria-label="Customize" $w={25}><Icon $w={13} $h={13} viewBox="0 0 13 13"><path d="M1 12l7-7" strokeWidth="2.400" /><path d="M12 2.500L9.800 4.500 8.500 3.200 10.500 1A3.300 3.300 0 1 0 12 2.500z" fill={c.icon} stroke="none" /></Icon></PlainButton>
      <CommandField>
        <Icon $w={14} $h={12} viewBox="0 0 14 12"><rect x=".5" y=".5" width="13" height="11" stroke="#8d9094" /><path d="M1 2h12" stroke="#8d9094" strokeWidth="2.500" /><path d="M2.500 5l2 1.500-2 1.500M5.500 9h3" stroke="#8d9094" /></Icon>
        <Caret s={6} color="#77797d" />
        <CommandInput aria-label="Command" placeholder="Type a command" />
        <Icon $w={6} $h={3} viewBox="0 0 6 3"><path d="M0 3h6L3 0z" fill="#444" stroke="none" /></Icon>
      </CommandField>
    </CommandBar>
  </CommandWindow>
);

const Arrow = ({ w = 14 }: { w?: number }) => <StatusButton $w={w} aria-label="Options"><Caret s={7} /></StatusButton>;
const Person = () => <path d="M8 1l2 6 4 7-5-3H7l-5 3 4-7z" fill="#e3e5e8" stroke="none" />;
const St = ({ name, on, w, children }: { name: string; on?: boolean; w?: number; children: React.ReactNode }) => (
  <StatusButton aria-label={name} $on={on} $w={w}><Icon viewBox="0 0 16 16">{children}</Icon></StatusButton>
);

const Status = () => (
  <StatusBar>
    <StatusButton $w={41}>MODEL</StatusButton>
    <StatusGroup>
      <St name="Grid"><path d="M4.500 1v14M8.500 1v14M12.500 1v14M1 4.500h14M1 8.500h14M1 12.500h14" /></St>
      <St name="Snap"><path d="M3 4h11M3 8h11M3 12h11" strokeDasharray="2 2" strokeWidth="2" stroke="#dfe1e5" /></St>
      <Arrow />
    </StatusGroup>
    <StatusGroup>
      <St name="Dynamic input" on><path d="M4.500 2v6M1.500 5h6" stroke="#fff" /><path d="M6 9h9v4H6z" fill="#fff" stroke="none" /></St>
      <St name="Ortho"><path d="M2.500 1v13.500H15M2.500 10h5v4" stroke="#a5a9b3" /></St>
      <St name="Polar"><circle cx="7" cy="8" r="5" /><path d="M7 8h8M7 8l5-6" /></St>
      <Arrow />
      <St name="Isometric"><path d="M4 3l9 10" stroke="#a8525a" /><path d="M8.500 1v14" stroke="#5c9b68" /></St>
      <Arrow w={13} />
    </StatusGroup>
    <StatusGroup>
      <St name="Object snap tracking" on><path d="M1 13.500h14M3 12L12 3" stroke="#dfe7f1" /><circle cx="7" cy="9" r="1" fill="#fff" /></St>
      <St name="Object snap" on><rect x="3.500" y="4.500" width="10" height="9" stroke="#dfe7f1" /><rect x="1.500" y="2.500" width="4" height="4" fill="#5685bd" stroke="#fff" /></St>
      <Arrow />
    </StatusGroup>
    <StatusGroup>
      <St name="Annotation visibility" on><Person /><circle cx="12.500" cy="4" r="2" /></St>
      <St name="Auto scale"><Person /><path d="M13 1l-2 3h3l-2 3" /></St>
      <St name="Annotation scale"><Person /></St>
      <StatusButton $w={31}>1:1<Caret s={7} /></StatusButton>
    </StatusGroup>
    <StatusGroup>
      <St name="Workspace"><circle cx="8" cy="8" r="3.700" stroke="#dfe1e5" strokeWidth="2.600" /><g stroke="#dfe1e5" strokeWidth="2.400"><path d="M8 1v3M8 12v3M1 8h3M12 8h3M3 3l2 2M11 11l2 2M13 3l-2 2M5 11l-2 2" /></g></St>
      <Arrow w={12} />
      <St name="Annotation monitor"><path d="M8 2v12M2 8h12" strokeWidth="1.800" stroke="#dfe1e5" /></St>
    </StatusGroup>
    <St name="Isolate objects" w={22}><rect x="1.500" y="2.500" width="5" height="5" /><circle cx="12" cy="7" r="2.700" /><path d="M7 9.500l2.500 4.500h-5z" /></St>
    <St name="Clean screen"><path d="M3 6V3h4M13 10v3H9M3 9v4h4M13 6V3H9" /></St>
  </StatusBar>
);

export default function App() {
  return (
    <Page>
      <GlobalStyle />
      <Header />
      <Menu>
        {MENU.map((m, i) => <MenuTab key={m} $active={i === 0}>{m}</MenuTab>)}
        <MinimizeRibbon aria-label="Minimize ribbon">
          <Icon $w={14} $h={7} viewBox="0 0 14 7"><rect width="14" height="7" fill="#eceef0" stroke="none" /><path d="M5 5h4L7 2z" fill="#333" stroke="none" /></Icon>
          <Caret />
        </MinimizeRibbon>
      </Menu>
      <RibbonBar />
      <FileTabs>
        <FileTab $w={101}>Start</FileTab>
        <FileTab $w={116} $active>
          Layout 1*
          <PlainButton aria-label="Close tab"><Icon $w={8} $h={8} viewBox="0 0 8 8"><path d="M.5.5l7 7M7.500.5l-7 7" strokeWidth="1.300" /></Icon></PlainButton>
        </FileTab>
        <NewTab aria-label="New tab"><Icon $w={8} $h={8} viewBox="0 0 8 8"><path d="M4 .5v7M.5 4h7" strokeWidth="1.500" /></Icon></NewTab>
      </FileTabs>
      <Workspace>
        <Plan />
        <ViewLabel>[-][Top][2D Wireframe]</ViewLabel>
        <ViewTools>
          <Icon $w={10} $h={3} viewBox="0 0 10 3"><rect width="10" height="3" fill="#dde0e5" stroke="none" /></Icon>
          <Icon $w={8} $h={6} viewBox="0 0 8 6"><rect y="-2" width="8" height="8" fill="#dde0e5" stroke="none" /></Icon>
        </ViewTools>
        <Cube />
        <Command />
      </Workspace>
      <LayoutTabs>
        <LayoutTab $w={46} $active>Model</LayoutTab>
        <LayoutTab $w={57}>Layout1</LayoutTab>
        <LayoutTab $w={57}>Layout2</LayoutTab>
        <AddLayout $w={20} aria-label="Add layout">
          <Icon $w={8} $h={8} viewBox="0 0 8 8"><path d="M4 .5v7M.5 4h7" strokeWidth="1.500" /></Icon>
        </AddLayout>
      </LayoutTabs>
      <Status />
      <Brand>
        <Icon $w={80} $h={64} viewBox="0 0 80 64">
          <rect y="2" width="55" height="55" fill="#cf2229" stroke="none" />
          <path d="M5 7C14 5 20 6 26 6C38 6 42 12 41 20C40 28 32 31 25 33L46 58C34 57 26 48 10 30C22 32 28 27 29 20C30 13 26 10 20 10C14 10 9 10 6 12Z" fill="#20262f" stroke="none" />
          <path d="M35 57C46 64 60 66 73 59C62 61 54 60 46 56Z" fill="#cf2229" stroke="none" />
        </Icon>
        <BrandText>
          <BrandName>ELIANCE</BrandName>
          <BrandLine>DESIGN SOLUTIONS</BrandLine>
          <BrandMotto>Reliable • Trust • Guaranteed</BrandMotto>
        </BrandText>
      </Brand>
    </Page>
  );
}
